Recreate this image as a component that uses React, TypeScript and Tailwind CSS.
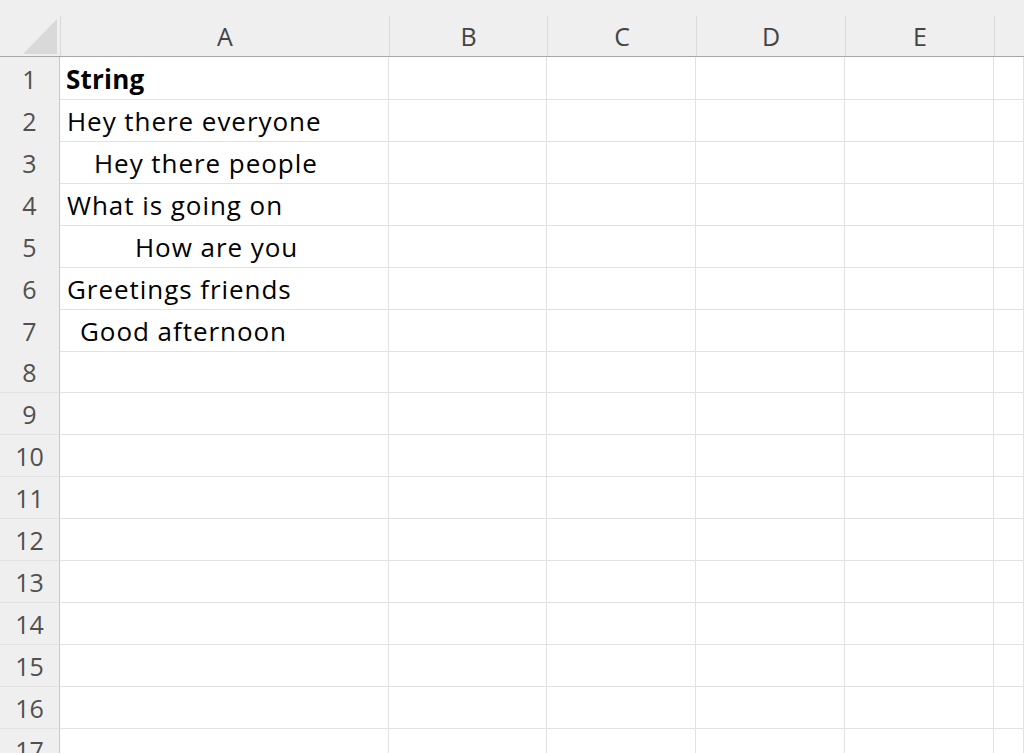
import React from "react";

const COLS = ["A", "B", "C", "D", "E", ""];
const GRID = "grid grid-cols-[60px_329px_158px_149px_149px_149px_1fr]";

type Cell = { text: string; indent: string; bold?: boolean };

const DATA: Record<number, Cell> = {
  1: { text: "String", indent: "pl-[6px]", bold: true },
  2: { text: "Hey there everyone", indent: "pl-[7px]" },
  3: { text: "Hey there people", indent: "pl-[34px]" },
  4: { text: "What is going on", indent: "pl-[7px]" },
  5: { text: "How are you", indent: "pl-[75px]" },
  6: { text: "Greetings friends", indent: "pl-[7px]" },
  7: { text: "Good afternoon", indent: "pl-[20px]" },
};

const ROWS = Array.from({ length: 17 }, (_, i) => i + 1);

export default function App() {
  return (
    <div className="w-[1024px] h-[753px] overflow-hidden bg-white font-['Open_Sans',sans-serif]">
      {/* top strip above the column headers */}
      <div className="h-[16px] bg-[#efefef]" />
      {/* column header row */}
      <div className={`${GRID} h-[41px] bg-[#efefef] border-b border-[#a6a6a6]`}>
        <div className="relative">
          <svg
            className="absolute left-[23px] top-[3px]"
            width="35"
            height="36"
            viewBox="0 0 35 36"
          >
            <polygon points="0,35 34,35 34,0" fill="#d9d9d9" />
          </svg>
        </div>
        {COLS.map((c, i) => (
          <div
            key={i}
            className="flex items-center justify-center pt-[2px] border-l border-[#dadada] text-[25px] text-[#444444]"
          >
            {c}
          </div>
        ))}
      </div>
      {/* data rows */}
      {ROWS.map((r) => {
        const cell = DATA[r];
        const first = (i: number) => i === 0 && cell;
        return (
          <div key={r} className={`${GRID} h-[42px]`}>
            <div className="flex items-center justify-center pt-[3px] bg-[#efefef] border-r border-[#c8c8c8] border-b border-b-[#e2e2e2] text-[25px] text-[#505050]">
              {r}
            </div>
            {COLS.map((_, i) => (
              <div
                key={i}
                className={`flex items-center pt-[3px] border-b border-r border-[#e2e2e2] text-[26px] text-black whitespace-nowrap overflow-visible ${
                  first(i) ? cell.indent : ""
                } ${
                  first(i) && cell.bold
                    ? "font-bold tracking-[0.2px]"
                    : "tracking-[0.95px]"
                }`}
              >
                {first(i) ? cell.text : ""}
              </div>
            ))}
          </div>
        );
      })}
    </div>
  );
}
